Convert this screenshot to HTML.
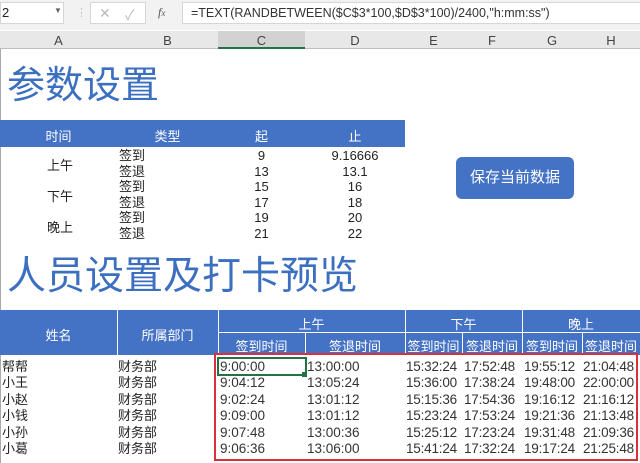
<!DOCTYPE html><html><head><meta charset="utf-8"><style>
*{margin:0;padding:0;box-sizing:border-box}
body{width:640px;height:463px;overflow:hidden;background:#fff;position:relative;font-family:"Liberation Sans","Noto Sans CJK SC",sans-serif;font-size:13px;color:#222}
.a{position:absolute;white-space:nowrap}
.c{text-align:center}
.hd{color:#fff}
</style></head><body>
<div class="a" style="left:0;top:0;width:640px;height:30px;background:#f2f2f2"></div>
<div class="a" style="left:0;top:2px;width:64px;height:22px;background:#fff;border:1px solid #d6d6d6;font-size:13px;padding:2px 1px">2<span style="position:absolute;left:53px;top:3px;font-size:8px;color:#666">▼</span></div>
<div class="a" style="left:76px;top:6px;color:#bbb;font-size:11px">⋮</div>
<div class="a" style="left:90px;top:2px;width:56px;height:22px;background:#fff;border:1px solid #d6d6d6"></div>
<div class="a" style="left:99px;top:5px;color:#bbb;font-size:14px">✕</div>
<div class="a" style="left:125px;top:5px;color:#bbb;font-size:14px">✓</div>
<div class="a" style="left:158px;top:5px;color:#555;font-size:12px;font-style:italic;font-family:'Liberation Serif',serif">f<span style="font-size:9px">x</span></div>
<div class="a" style="left:182px;top:2px;width:460px;height:22px;background:#fff;border:1px solid #d6d6d6;padding:3px 8px;font-size:12.5px;color:#333">=TEXT(RANDBETWEEN($C$3*100,$D$3*100)/2400,"h:mm:ss")</div>
<div class="a" style="left:0;top:31px;width:640px;height:18px;background:#e8e8e8;border-bottom:1px solid #bdbdbd"></div>
<div class="a" style="left:218px;top:31px;width:87px;height:18px;background:#d2d2d2;border-bottom:2px solid #217346"></div>
<div class="a c" style="left:0;top:33px;width:117px;color:#444">A</div>
<div class="a c" style="left:117px;top:33px;width:101px;color:#444">B</div>
<div class="a c" style="left:218px;top:33px;width:87px;color:#444">C</div>
<div class="a c" style="left:305px;top:33px;width:100px;color:#444">D</div>
<div class="a c" style="left:405px;top:33px;width:57px;color:#444">E</div>
<div class="a c" style="left:462px;top:33px;width:60px;color:#444">F</div>
<div class="a c" style="left:522px;top:33px;width:60px;color:#444">G</div>
<div class="a c" style="left:582px;top:33px;width:58px;color:#444">H</div>
<div class="a" style="left:0;top:49px;width:1px;height:414px;background:#aaa"></div>
<div class="a" style="left:7px;top:63px;font-size:38px;color:#3d6fc1;line-height:46px">参数设置</div>
<div class="a" style="left:0;top:120px;width:405px;height:27px;background:#4472c4"></div>
<div class="a c hd" style="left:0;top:126px;width:117px">时间</div>
<div class="a c hd" style="left:117px;top:126px;width:101px">类型</div>
<div class="a c hd" style="left:218px;top:126px;width:87px">起</div>
<div class="a c hd" style="left:305px;top:126px;width:100px">止</div>
<div class="a" style="left:47px;top:155px">上午</div>
<div class="a" style="left:47px;top:186px">下午</div>
<div class="a" style="left:47px;top:217px">晚上</div>
<div class="a" style="left:119px;top:148px;line-height:15.5px">签到<br>签退<br>签到<br>签退<br>签到<br>签退</div>
<div class="a c" style="left:218px;top:148px;width:87px;line-height:15.5px">9<br>13<br>15<br>17<br>19<br>21</div>
<div class="a c" style="left:305px;top:148px;width:100px;line-height:15.5px">9.16666<br>13.1<br>16<br>18<br>20<br>22</div>
<div class="a c" style="left:456px;top:157px;width:118px;height:42px;background:#4472c4;border-radius:6px;color:#fff;font-size:15px;line-height:42px">保存当前数据</div>
<div class="a" style="left:7px;top:254px;font-size:39px;color:#3d6fc1;line-height:46px">人员设置及打卡预览</div>
<div class="a" style="left:0;top:310px;width:640px;height:45px;background:#4472c4"></div>
<div class="a" style="left:218px;top:332px;width:422px;height:1px;background:#fff"></div>
<div class="a" style="left:117px;top:310px;width:1px;height:45px;background:#fff"></div>
<div class="a" style="left:218px;top:310px;width:1px;height:45px;background:#fff"></div>
<div class="a" style="left:305px;top:332px;width:1px;height:23px;background:#fff"></div>
<div class="a" style="left:405px;top:310px;width:1px;height:45px;background:#fff"></div>
<div class="a" style="left:462px;top:332px;width:1px;height:23px;background:#fff"></div>
<div class="a" style="left:522px;top:310px;width:1px;height:45px;background:#fff"></div>
<div class="a" style="left:582px;top:332px;width:1px;height:23px;background:#fff"></div>
<div class="a c hd" style="left:0;top:325px;width:117px">姓名</div>
<div class="a c hd" style="left:117px;top:325px;width:101px">所属部门</div>
<div class="a c hd" style="left:218px;top:314px;width:187px">上午</div>
<div class="a c hd" style="left:405px;top:314px;width:117px">下午</div>
<div class="a c hd" style="left:522px;top:314px;width:118px">晚上</div>
<div class="a c hd" style="left:218px;top:336px;width:87px">签到时间</div>
<div class="a c hd" style="left:305px;top:336px;width:100px">签退时间</div>
<div class="a c hd" style="left:405px;top:336px;width:57px">签到时间</div>
<div class="a c hd" style="left:462px;top:336px;width:60px">签退时间</div>
<div class="a c hd" style="left:522px;top:336px;width:60px">签到时间</div>
<div class="a c hd" style="left:582px;top:336px;width:58px">签退时间</div>
<div class="a" style="left:2px;top:359px;line-height:16.4px">帮帮<br>小王<br>小赵<br>小钱<br>小孙<br>小葛</div>
<div class="a" style="left:118px;top:359px;line-height:16.4px">财务部<br>财务部<br>财务部<br>财务部<br>财务部<br>财务部</div>
<div class="a" style="left:220px;top:359px;line-height:16.4px;font-size:13.5px;color:#333">9:00:00<br>9:04:12<br>9:02:24<br>9:09:00<br>9:07:48<br>9:06:36</div>
<div class="a" style="left:307px;top:359px;line-height:16.4px;font-size:13.5px;color:#333">13:00:00<br>13:05:24<br>13:01:12<br>13:01:12<br>13:00:36<br>13:06:00</div>
<div class="a" style="left:406px;top:359px;line-height:16.4px;font-size:13.5px;color:#333;letter-spacing:-.2px">15:32:24<br>15:36:00<br>15:15:36<br>15:23:24<br>15:25:12<br>15:41:24</div>
<div class="a" style="left:464px;top:359px;line-height:16.4px;font-size:13.5px;color:#333;letter-spacing:-.2px">17:52:48<br>17:38:24<br>17:54:36<br>17:53:24<br>17:23:24<br>17:32:24</div>
<div class="a" style="left:524px;top:359px;line-height:16.4px;font-size:13.5px;color:#333;letter-spacing:-.2px">19:55:12<br>19:48:00<br>19:16:12<br>19:21:36<br>19:31:48<br>19:17:24</div>
<div class="a" style="left:583px;top:359px;line-height:16.4px;font-size:13.5px;color:#333;letter-spacing:-.2px">21:04:48<br>22:00:00<br>21:16:12<br>21:13:48<br>21:09:36<br>21:25:48</div>
<div class="a" style="left:217px;top:357px;width:90px;height:19px;border:2px solid #217346"></div>
<div class="a" style="left:302px;top:372px;width:5px;height:5px;background:#217346"></div>
<div class="a" style="left:214px;top:353px;width:424px;height:108px;border:2px solid #d9303e"></div>
</body></html>
